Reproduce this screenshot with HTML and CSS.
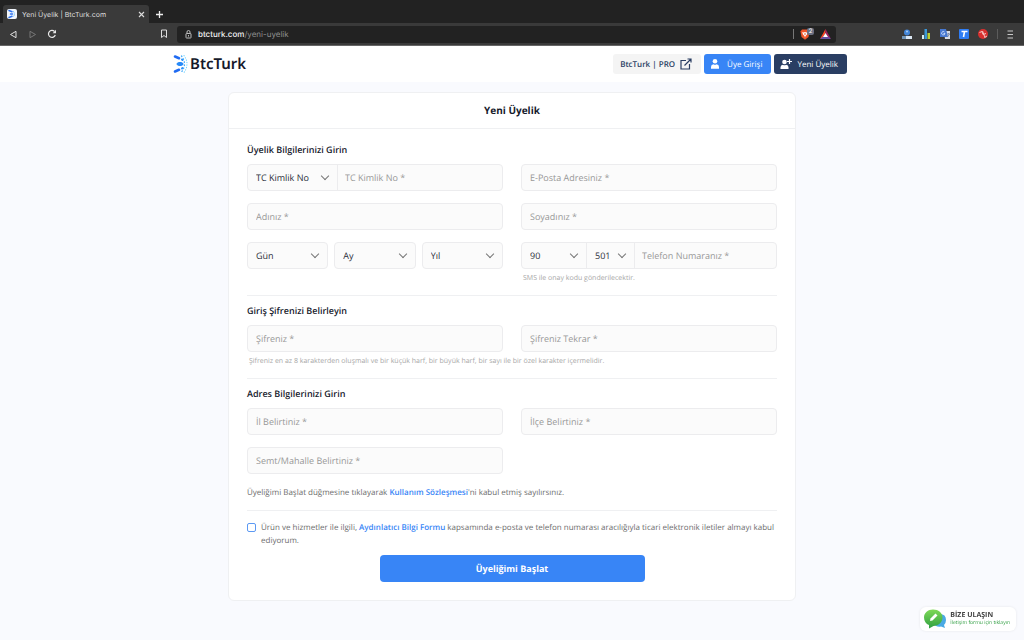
FILE: index.html
```html
<!DOCTYPE html>
<html lang="tr">
<head>
    <meta charset="UTF-8">
    <meta name="viewport" content="width=device-width, initial-scale=1.0">
    <title>Yeni Üyelik | BtcTurk.com</title>
    <link rel="stylesheet" href="styles.css">
</head>
<body>
    <!-- browser -->
    <div class="browser">
        <div class="tabs">
            <div class="tab">
                <svg class="favicon" viewBox="0 0 10 10"><rect width="10" height="10" rx="2" fill="#f2f6fc"/><path d="M2 1.500l3 1.200M2 8.500l3-1.200M3.500 5h2" stroke="#2f73f0" stroke-width="1.500" stroke-linecap="round"/><path d="M6 2q3 3 0 6" fill="none" stroke="#62bdf9" stroke-dasharray="1 .6"/></svg>
                <span class="tab-title">Yeni Üyelik | BtcTurk.com</span>
                <button class="icon-btn" aria-label="Sekmeyi kapat"><svg width="7" height="7" viewBox="0 0 7 7"><path d="M1 1l5 5M6 1L1 6" stroke="#ddd" stroke-width="1.100"/></svg></button>
            </div>
            <button class="icon-btn" aria-label="Yeni sekme"><svg width="9" height="9" viewBox="0 0 9 9"><path d="M4.500 1v7M1 4.500h7" stroke="#eee" stroke-width="1.300"/></svg></button>
        </div>
        <div class="toolbar">
            <div class="nav">
                <button class="icon-btn" aria-label="Geri"><svg width="9" height="9" viewBox="0 0 9 9"><path d="M7 1.300v6.400L1.500 4.500z" fill="none" stroke="#e2e2e2" stroke-linejoin="round"/></svg></button>
                <button class="icon-btn" aria-label="İleri"><svg width="9" height="9" viewBox="0 0 9 9"><path d="M2 1.300v6.400l5.500-3.200z" fill="none" stroke="#777" stroke-linejoin="round"/></svg></button>
                <button class="icon-btn" aria-label="Yenile"><svg width="10" height="10" viewBox="0 0 10 10"><path d="M8.300 6A3.500 3.500 0 1 1 7.500 2.500" fill="none" stroke="#e8e8e8" stroke-width="1.200"/><path d="M9 .8v3.400H5.600z" fill="#e8e8e8"/></svg></button>
            </div>
            <button class="icon-btn" aria-label="Yer imi"><svg width="8" height="10" viewBox="0 0 8 10"><path d="M1.500 1h5v7.500L4 6.500l-2.500 2z" fill="none" stroke="#ddd"/></svg></button>
            <div class="address">
                <svg width="7" height="9" viewBox="0 0 7 9"><rect x="1" y="3.500" width="5" height="4.500" rx=".5" fill="none" stroke="#bbb"/><path d="M2 3.500V2a1.500 1.500 0 0 1 3 0v1.500M3.500 5v1.500" fill="none" stroke="#bbb"/></svg>
                <span class="url"><b>btcturk.com</b>/yeni-uyelik</span>
                <i class="sep"></i>
                <span class="shield">
                    <svg width="10" height="11" viewBox="0 0 10 11"><path d="M2 .5h6L9.500 2.500 8.500 8 5 10.700 1.500 8 .5 2.500z" fill="#f0562a"/><path d="M2.200 3l1.500.5L5 3l1.300.5L7.800 3 7 5.500 5.500 7 5 8.800 4.500 7 3 5.500z" fill="#fff"/><path d="M5 4v2" stroke="#f0562a"/></svg>
                    <span class="count">2</span>
                </span>
                <svg width="11" height="10" viewBox="0 0 11 10"><path d="M5.500 0v4L3 8.200 0 10z" fill="#ff4724"/><path d="M5.500 0L11 10 8 8.200 5.500 4z" fill="#9e1f63"/><path d="M0 10l3-2.500h5L11 10z" fill="#6650a4"/><path d="M5.500 4L8 8H3z" fill="#fff"/></svg>
            </div>
            <div class="extensions">
                <svg width="10" height="10" viewBox="0 0 10 10"><circle cx="5" cy="3.500" r="3" fill="#4285d8"/><circle cx="5" cy="2.500" r="1" fill="#a9cdf5"/><path d="M0 7h10v3H0z" fill="#dbe7f3"/><path d="M0 7h4v3H0z" fill="#7396b8"/></svg>
                <svg width="10" height="10" viewBox="0 0 10 10"><path d="M1 6h2v4H1z" fill="#d8edf0"/><path d="M3.500 0H6v10H3.500z" fill="#3a98d8"/><path d="M6.500 4H9v6H6.500z" fill="#b9cf31"/></svg>
                <svg width="10" height="10" viewBox="0 0 10 10"><path d="M4 2h6v8H5z" fill="#d7dce5"/><path d="M0 0h6l2 8H0z" fill="#4778d0"/><path d="M4.500 3A1.700 1.700 0 1 0 5 4.500H3.500" fill="none" stroke="#dce8ff" stroke-width=".8"/><path d="M7 5h3M8.500 4v1M7.500 8l2-3" stroke="#667799" stroke-width=".7"/></svg>
                <svg width="10" height="10" viewBox="0 0 10 10"><rect width="10" height="10" rx="1" fill="#2f7df4"/><path d="M2.500 2.500h6M5.500 2.500L4.500 8" stroke="#fff" stroke-width="1.600"/></svg>
                <svg width="10" height="10" viewBox="0 0 10 10"><circle cx="5" cy="5" r="5" fill="#d8302f"/><path d="M1.500 3.500L4 2.500l1 3 3-1M4.500 2l2.500 6.500M6.500 8.500L9 7" fill="none" stroke="#f6c5c2"/></svg>
                <i class="sep"></i>
                <button class="icon-btn" aria-label="Menü"><svg width="7" height="9" viewBox="0 0 7 9"><path d="M.5 1h5.500M.5 4.500h5.500M.5 8h5.500" stroke="#c8c8c8" stroke-width="1.100"/></svg></button>
            </div>
        </div>
    </div>

    <header class="header">
        <div class="header-inner">
            <a class="logo" href="#">
                <svg width="15" height="20" viewBox="0 0 15 20">
                    <g fill="none" stroke-linecap="round">
                        <path d="M2 2.500l4 1.700M2 17.500l4-1.700" stroke="#206bf2" stroke-width="2.600"/>
                        <path d="M6 10h2" stroke="#278af8" stroke-width="3.800"/>
                        <path d="M4.500 10h5" stroke="#278af8" stroke-width="2"/>
                        <path d="M9 5.500l.5.500M9 14.500l.5-.5" stroke="#2c91fa" stroke-width="2"/>
                        <path d="M8.500 2q6 8 0 16" stroke="#43abfb" stroke-width="1.300" stroke-dasharray=".6 2.600"/>
                        <path d="M11 1.500q6 8.500 0 17" stroke="#75d3fc" stroke-width="1.100" stroke-dasharray=".4 2.100"/>
                    </g>
                </svg>
                <span>BtcTurk</span>
            </a>
            <nav class="menu">
                <a class="btn btn-pro" href="#">BtcTurk | PRO
                    <svg width="12" height="12" viewBox="0 0 12 12"><path d="M6 2.500H1v8.500h8.500V6M4.500 7.500L11 1M7.500 1H11v3.500" fill="none" stroke="#2a3e63" stroke-width="1.200"/></svg>
                </a>
                <a class="btn btn-login" href="#">
                    <svg width="12" height="12" viewBox="0 0 12 12"><circle cx="5" cy="3.300" r="2.300" fill="#fff"/><path d="M1 10.800V9q0-2.500 2.500-2.700Q5 7.300 6.500 6.300 9 6.500 9 9v1.800z" fill="#fff"/></svg>
                    Üye Girişi</a>
                <a class="btn btn-signup" href="#">
                    <svg width="12" height="12" viewBox="0 0 12 12"><circle cx="4.500" cy="4" r="2.300" fill="#fff"/><path d="M.5 11V9.200q0-2.200 2.500-2.400 1.500 1 3 0 2.500.2 2.500 2.400V11z" fill="#fff"/><path d="M9.500 1v5M7 3.500h5" stroke="#fff" stroke-width="1.200"/></svg>
                    Yeni Üyelik</a>
            </nav>
        </div>
    </header>

    <main class="card">
        <h1>Yeni Üyelik</h1>
        <form class="form">
            <section>
                <h2>Üyelik Bilgilerinizi Girin</h2>
                <div class="grid">
                    <div class="group">
                        <div class="select id-type"><select aria-label="Kimlik türü"><option>TC Kimlik No</option></select></div>
                        <input type="text" placeholder="TC Kimlik No *" aria-label="TC Kimlik No">
                    </div>
                    <div class="group"><input type="email" placeholder="E-Posta Adresiniz *" aria-label="E-Posta Adresiniz"></div>
                    <div class="group"><input type="text" placeholder="Adınız *" aria-label="Adınız"></div>
                    <div class="group"><input type="text" placeholder="Soyadınız *" aria-label="Soyadınız"></div>
                    <div class="dates">
                        <div class="group"><div class="select"><select aria-label="Gün"><option>Gün</option></select></div></div>
                        <div class="group"><div class="select"><select aria-label="Ay"><option>Ay</option></select></div></div>
                        <div class="group"><div class="select"><select aria-label="Yıl"><option>Yıl</option></select></div></div>
                    </div>
                    <div>
                        <div class="group">
                            <div class="select country"><select aria-label="Ülke kodu"><option>90</option></select></div>
                            <div class="select operator"><select aria-label="Operatör kodu"><option>501</option></select></div>
                            <input type="tel" placeholder="Telefon Numaranız *" aria-label="Telefon Numaranız">
                        </div>
                        <p class="hint">SMS ile onay kodu gönderilecektir.</p>
                    </div>
                </div>
            </section>
            <section>
                <h2>Giriş Şifrenizi Belirleyin</h2>
                <div class="grid">
                    <div class="group"><input type="password" placeholder="Şifreniz *" aria-label="Şifreniz"></div>
                    <div class="group"><input type="password" placeholder="Şifreniz Tekrar *" aria-label="Şifreniz Tekrar"></div>
                </div>
                <p class="hint">Şifreniz en az 8 karakterden oluşmalı ve bir küçük harf, bir büyük harf, bir sayı ile bir özel karakter içermelidir.</p>
            </section>
            <section>
                <h2>Adres Bilgilerinizi Girin</h2>
                <div class="grid">
                    <div class="group"><input type="text" placeholder="İl Belirtiniz *" aria-label="İl Belirtiniz"></div>
                    <div class="group"><input type="text" placeholder="İlçe Belirtiniz *" aria-label="İlçe Belirtiniz"></div>
                    <div class="group"><input type="text" placeholder="Semt/Mahalle Belirtiniz *" aria-label="Semt/Mahalle Belirtiniz"></div>
                </div>
                <p class="terms">Üyeliğimi Başlat düğmesine tıklayarak <a href="#">Kullanım Sözleşmesi</a>'ni kabul etmiş sayılırsınız.</p>
            </section>
            <div class="consent">
                <input type="checkbox" id="consent">
                <label for="consent">Ürün ve hizmetler ile ilgili, <a href="#">Aydınlatıcı Bilgi Formu</a> kapsamında e-posta ve telefon numarası aracılığıyla ticari elektronik iletiler almayı kabul ediyorum.</label>
            </div>
            <button class="submit" type="submit">Üyeliğimi Başlat</button>
        </form>
    </main>

    <!-- iletişim -->
    <a class="contact" href="#">
        <svg width="24" height="20" viewBox="0 0 24 20">
            <defs>
                <linearGradient id="green" x2="0" y2="1"><stop stop-color="#7ed957"/><stop offset="1" stop-color="#2f9e41"/></linearGradient>
            </defs>
            <path d="M15 5q8-1 8 6 0 3-2 5l1 3-4-1.500q-5 1-7-3z" fill="#4aa9e4"/>
            <path d="M10 .5c5.500 0 9.500 3.500 9.500 8s-4 8.500-9 8.500L6 19.500V16C3 15 1 12 1 8.500c0-4.500 4-8 9-8z" fill="url(#green)"/>
            <path d="M7 12l.5-2.500L12.500 4.500l2 2-5 5z" fill="#fff"/>
        </svg>
        <span class="contact-text"><b>BİZE ULAŞIN</b><span>İletişim formu için tıklayın</span></span>
    </a>
</body>
</html>
```
FILE: styles.css
```css
* {
    margin: 0;
    padding: 0;
    box-sizing: border-box;
}

body {
    background: #f9fafe;
    font-family: 'Open Sans', sans-serif;
    font-size: 9px;
    color: #15192b;
    min-height: 100vh;
    text-rendering: geometricPrecision;
}

svg {
    display: block;
    flex: none;
}

a {
    color: #3885f6;
    text-decoration: none;
}

/* browser */
.browser {
    background: #222;
    font-family: Inter, sans-serif;
    border-bottom: 1px solid #666;
}

.tabs {
    display: flex;
    align-items: flex-end;
    height: 23px;
    gap: 6px;
    padding-left: 3px;
}

.tabs > .icon-btn {
    height: 18px;
}

.tab {
    display: flex;
    align-items: center;
    width: 146px;
    height: 18px;
    padding: 0 4px;
    background: #3a3a3a;
    border-radius: 3px 3px 0 0;
}

.favicon {
    width: 10px;
    height: 10px;
}

.tab-title {
    flex: 1;
    margin-left: 5px;
    font-size: 7px;
    color: #ddd;
}

.icon-btn {
    display: flex;
    align-items: center;
    background: none;
    border: none;
}

.toolbar {
    display: flex;
    align-items: center;
    height: 22px;
    padding: 0 10px 0 9px;
    background: #3a3a3a;
}

.nav {
    display: flex;
    gap: 10px;
    width: 151px;
}

.address {
    flex: 1;
    display: flex;
    align-items: center;
    height: 17px;
    margin-left: 9px;
    padding: 0 5px 0 8px;
    background: #222;
    border-radius: 3px;
}

.url {
    flex: 1;
    margin-left: 6px;
    font-size: 8px;
    color: #8d8d8d;
}

.url b {
    font-weight: 500;
    color: #f4f4f4;
}

.sep {
    width: 1px;
    height: 10px;
    background: #777;
}

.shield {
    position: relative;
    margin: 0 10px 0 6px;
}

.count {
    position: absolute;
    top: -1px;
    left: 7px;
    width: 7px;
    height: 7px;
    border-radius: 2px;
    background: #6b7082;
    color: #fff;
    font-size: 6px;
    line-height: 7px;
    text-align: center;
}

.extensions {
    display: flex;
    align-items: center;
    gap: 9px;
    margin-left: 66px;
}

.extensions .sep {
    background: #5c5c5c;
}

/* header */
.header {
    background: #fff;
}

.header-inner {
    display: flex;
    align-items: center;
    justify-content: space-between;
    max-width: 678px;
    height: 36px;
    margin: 0 auto;
    padding-right: 4px;
}

.logo {
    display: flex;
    align-items: center;
    gap: 2px;
    font-family: 'Noto Sans', sans-serif;
    font-size: 15px;
    font-weight: 600;
    line-height: 20px;
    color: #15192b;
}

.menu {
    display: flex;
    gap: 3px;
}

.btn {
    display: flex;
    align-items: center;
    height: 20px;
    padding: 0 9px 0 6px;
    gap: 5px;
    border-radius: 3px;
    color: #fff;
    font-size: 8px;
}

.btn-pro {
    padding-left: 7px;
    background: #f4f4f4;
    color: #2a3e63;
    font-weight: 600;
}

.btn-login {
    background: #3885f6;
}

.btn-signup {
    background: #2a3e63;
}

/* form */
.card {
    max-width: 568px;
    margin: 10px auto 0;
    background: #fff;
    border: 1px solid #eff0f2;
    border-radius: 6px;
}

h1 {
    height: 36px;
    border-bottom: 1px solid #eff0f2;
    font-size: 10px;
    font-weight: 700;
    line-height: 35px;
    text-align: center;
}

.form {
    padding: 13px 18px 18px;
}

section {
    padding-bottom: 11px;
    margin-bottom: 7px;
    border-bottom: 1px solid #eff0f2;
}

h2 {
    margin-bottom: 7px;
    font-size: 9px;
    font-weight: 600;
    line-height: 15px;
}

.grid {
    display: grid;
    grid-template-columns: 1fr 1fr;
    gap: 12px 18px;
}

.group {
    display: flex;
    height: 27px;
    background: #fbfbfb;
    border: 1px solid #ececee;
    border-radius: 4px;
}

.group input,
.group select {
    width: 100%;
    min-width: 0;
    height: 100%;
    padding: 0 8px;
    background: none;
    border: none;
    outline: none;
    font: inherit;
    text-rendering: inherit;
    color: #2b2f3a;
}

.group .select + input {
    padding-left: 7px;
}

.group input::placeholder {
    color: #989898;
}

.group select {
    appearance: none;
}

.select {
    position: relative;
    flex: 1;
}

.select:not(:last-child) {
    border-right: 1px solid #ececee;
}

/* chevron */
.select::after {
    content: '';
    position: absolute;
    top: 8px;
    right: 9px;
    width: 5px;
    height: 5px;
    border: solid #777;
    border-width: 0 1px 1px 0;
    transform: rotate(45deg);
    pointer-events: none;
}

.id-type {
    flex: 0 0 90px;
}

.country {
    flex: 0 0 65px;
}

.operator {
    flex: 0 0 48px;
}

.dates {
    display: grid;
    grid-template-columns: repeat(3, 1fr);
    gap: 6px;
}

.hint {
    margin: 4px 0 0 2px;
    font-size: 7px;
    line-height: 11px;
    color: #a8a8a8;
}

.terms,
.consent {
    font-size: 8px;
    line-height: 13px;
    color: #6d6d6d;
}

.terms {
    margin-top: 12px;
}

.terms a,
.consent a {
    font-weight: 600;
}

.consent {
    display: flex;
    gap: 5px;
    margin-top: 10px;
}

.consent input {
    appearance: none;
    flex: none;
    width: 9px;
    height: 9px;
    margin-top: 2px;
    border: 1px solid #5c99f3;
    border-radius: 2px;
}

.submit {
    display: block;
    width: 50%;
    height: 27px;
    margin: 8px auto 0;
    background: #3885f6;
    border: none;
    border-radius: 4px;
    color: #fff;
    font: 700 9px 'Open Sans', sans-serif;
    text-rendering: inherit;
    cursor: pointer;
}

/* contact */
.contact {
    position: fixed;
    right: 8px;
    bottom: 9px;
    display: flex;
    align-items: center;
    gap: 3px;
    height: 24px;
    padding: 0 6px 0 3px;
    background: #fff;
    border-radius: 6px;
    box-shadow: 0 0 3px rgba(0, 0, 0, 0.08);
}

.contact-text {
    display: flex;
    flex-direction: column;
    font-size: 5px;
    line-height: 7px;
    color: #2f9e41;
}

.contact-text b {
    font-size: 7px;
    line-height: 8px;
    color: #444;
}
```
